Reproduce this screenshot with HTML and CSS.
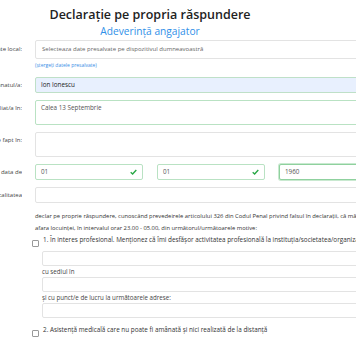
FILE: index.html
```html
<!DOCTYPE html>
<html lang="ro">
<head>
<meta charset="utf-8">
<title>Declarație pe propria răspundere</title>
<link rel="stylesheet" href="styles.css">
</head>
<body>
<div class="page">
  <header class="head">
    <h1 class="title">Declarație pe propria răspundere</h1>
    <h2 class="subtitle">Adeverință angajator</h2>
  </header>

  <form class="form">
    <div class="row">
      <label class="lbl lbl-select"><span>Date salvate local:</span></label>
      <div class="field">
        <div class="ctl select">Selecteaza date presalvate pe dispozitivul dumneavoastră</div>
        <a class="clear" href="#">(ștergeți datele presalvate)</a>
      </div>
    </div>

    <div class="row">
      <label class="lbl"><span>Subsemnatul/a:</span></label>
      <div class="field"><div class="ctl input autofill">Ion Ionescu</div></div>
    </div>

    <div class="row">
      <label class="lbl"><span>Domiciliat/a în:</span></label>
      <div class="field"><div class="ctl area valid">Calea 13 Septembrie</div></div>
    </div>

    <div class="row">
      <label class="lbl"><span>Cu reședința de fapt în:</span></label>
      <div class="field"><div class="ctl area"></div></div>
    </div>

    <div class="row">
      <label class="lbl"><span>Născut/ă la data de</span></label>
      <div class="field dates">
        <div class="ctl input valid check">01
          <svg class="tick" viewBox="0 0 8 6" width="7" height="6"><polyline points="0.8,3.2 3,5.2 7.2,0.8" fill="none" stroke="#28a745" stroke-width="1.6"/></svg>
        </div>
        <div class="ctl input valid check">01
          <svg class="tick" viewBox="0 0 8 6" width="7" height="6"><polyline points="0.8,3.2 3,5.2 7.2,0.8" fill="none" stroke="#28a745" stroke-width="1.6"/></svg>
        </div>
        <div class="ctl input valid focus">1960</div>
      </div>
    </div>

    <div class="row">
      <label class="lbl"><span>în localitatea</span></label>
      <div class="field"><div class="ctl input"></div></div>
    </div>
  </form>

  <p class="decl">declar pe proprie răspundere, cunoscând prevedeirele articolului 326 din Codul Penal privind falsul în declarații, că mă deplasez în<br>afara locuinței, în intervalul orar 23.00 - 05.00, din următorul/următoarele motive:</p>

  <div class="opt">
    <span class="box"></span>
    <div class="opt-body">
      <div class="opt-text">1. În interes profesional. Menționez că îmi desfășor activitatea profesională la instituția/societatea/organizația</div>
      <div class="ctl sub"></div>
      <div class="sub-lbl">cu sediul în</div>
      <div class="ctl sub"></div>
      <div class="sub-lbl">și cu punct/e de lucru la următoarele adrese:</div>
      <div class="ctl sub"></div>
    </div>
  </div>

  <div class="opt opt2">
    <span class="box"></span>
    <div class="opt-body">
      <div class="opt-text">2. Asistență medicală care nu poate fi amânată și nici realizată de la distanță</div>
    </div>
  </div>
</div>
</body>
</html>
```

FILE: styles.css
```css
html, body {
  margin: 0;
  padding: 0;
  overflow: hidden;
  background: #fff;
}

body {
  font-family: "Open Sans", "Noto Sans", sans-serif;
  color: #333;
  width: 356px;
  height: 364px;
}

.page {
  width: 460px;
}

.head {
  width: 300px;
  padding-top: 6px;
}

.title {
  margin: 0;
  text-align: center;
  font-size: 12.5px;
  line-height: 18px;
  font-weight: 600;
  color: #222;
}

.subtitle {
  margin: 0;
  text-align: center;
  font-size: 10.2px;
  line-height: 14px;
  font-weight: 400;
  color: #2f8fe8;
}

.form {
  margin-top: 2px;
}

.row {
  display: grid;
  grid-template-columns: 22px 420px;
  column-gap: 13px;
  margin-bottom: 7px;
  align-items: start;
}

.lbl {
  display: flex;
  justify-content: flex-end;
  overflow: hidden;
  white-space: nowrap;
  font-size: 6px;
  line-height: 16px;
  color: #444;
}

.lbl-select {
  line-height: 19px;
}

.field {
  min-width: 0;
}

.ctl {
  box-sizing: border-box;
  border: 1px solid #e3e3e3;
  border-radius: 2px;
  background: #fff;
  font-size: 6.3px;
  color: #555;
  padding: 0 5px;
  position: relative;
}

.select {
  height: 19px;
  line-height: 17px;
  font-size: 6px;
  color: #666;
  padding: 0 6px;
}

.clear {
  display: block;
  font-size: 5px;
  line-height: 8px;
  margin-top: 2px;
  margin-bottom: 1px;
  color: #3a8ee6;
  text-decoration: none;
}

.input {
  height: 16px;
  line-height: 14px;
}

.autofill {
  background: #e8f0fe;
  border-color: #bfe0c8;
  color: #222;
}

.area {
  height: 25px;
  line-height: 14px;
}

.valid {
  border-color: #b9e2c3;
}

.dates {
  display: flex;
  gap: 14px;
}

.dates .ctl {
  width: 108px;
  flex: none;
}

.tick {
  position: absolute;
  right: 5px;
  top: 4px;
}

.focus {
  border-color: #8fd19e;
  box-shadow: 0 0 0 1px rgba(40, 167, 69, 0.25);
}

.decl {
  margin: 7px 0 0 35px;
  font-size: 5.85px;
  line-height: 12px;
  color: #333;
  white-space: nowrap;
}

.opt {
  display: flex;
  align-items: flex-start;
  margin-left: 32px;
  gap: 4px;
}

.box {
  flex: none;
  box-sizing: border-box;
  width: 7px;
  height: 7px;
  border: 1px solid #999;
  border-radius: 1px;
  margin-top: 6px;
  background: #fff;
}

.opt-body {
  width: 400px;
}

.opt-text {
  font-size: 6.35px;
  line-height: 12px;
  color: #333;
  white-space: nowrap;
  margin-bottom: 5px;
}

.sub {
  height: 15px;
  margin-left: -1px;
}

.sub-lbl {
  font-size: 6.2px;
  line-height: 11px;
  color: #444;
  margin-left: -1px;
}

.opt2 {
  margin-top: 6px;
}
```
